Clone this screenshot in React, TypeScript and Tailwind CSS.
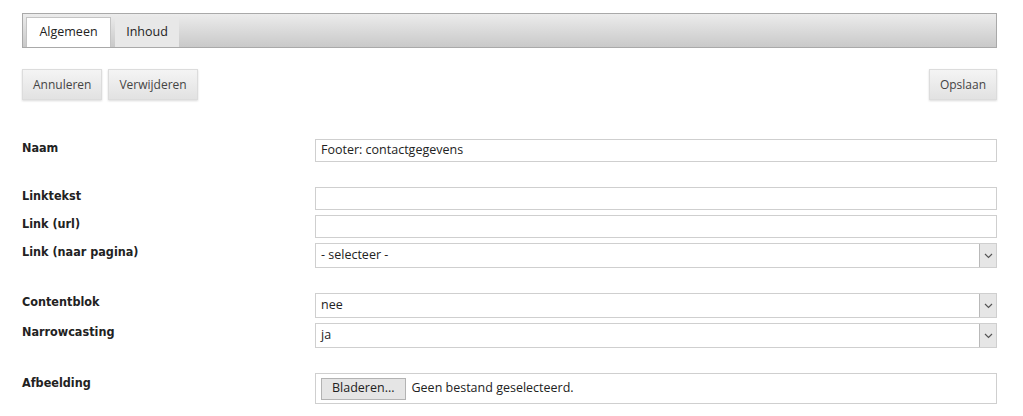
import React from "react";

const ui = { fontFamily: '"Open Sans", "Noto Sans", sans-serif' };
const lbl = { fontFamily: '"DejaVu Sans Condensed", "DejaVu Sans", sans-serif' };

function Btn({ children }: { children: React.ReactNode }) {
  return (
    <button
      className="h-[31px] px-[10px] border border-[#dcdcdc] bg-gradient-to-b from-[#f4f4f4] to-[#e2e2e2] text-[12px] text-[#444] shadow-[0_1px_2px_rgba(0,0,0,0.15)]"
      style={ui}
    >
      {children}
    </button>
  );
}

function Label({ children }: { children: React.ReactNode }) {
  return (
    <div className="w-[293px] shrink-0 pt-0 text-[12.5px] leading-[18px] font-bold text-[#222]" style={lbl}>
      {children}
    </div>
  );
}

function TextInput({ value = "" }: { value?: string }) {
  return (
    <div
      className="flex-1 h-[23px] border border-[#cfcfcf] bg-white px-[5px] flex items-center text-[12.5px] text-[#222]"
      style={ui}
    >
      {value}
    </div>
  );
}

function Select({ value }: { value: string }) {
  return (
    <div className="flex-1 h-[25px] border border-[#cfcfcf] bg-white flex items-stretch" style={ui}>
      <div className="flex-1 px-[5px] flex items-center text-[12.5px] text-[#222]">{value}</div>
      <div className="w-[17px] border-l border-[#b9b9b9] bg-[#e6e6e6] flex items-center justify-center">
        <svg width="9" height="6" viewBox="0 0 9 6">
          <path d="M1 1 L4.5 4.5 L8 1" fill="none" stroke="#555" strokeWidth="1.2" />
        </svg>
      </div>
    </div>
  );
}

export default function App() {
  return (
    <div className="w-[1023px] h-[416px] bg-white pl-[22px] pr-[26px] pt-[13px] overflow-hidden">
      <div className="h-[35px] border border-[#a9a9a9] bg-gradient-to-b from-[#ececec] to-[#c9c9c9] flex items-end pl-[3px] gap-[4px]" style={ui}>
        <div className="h-[30px] w-[85px] bg-white border-l border-t border-r border-[#c4c4c4] flex items-center justify-center text-[12.5px] text-[#222]">
          Algemeen
        </div>
        <div className="h-[30px] w-[64px] bg-[#e8e8e8] flex items-center justify-center text-[12.5px] text-[#222]">
          Inhoud
        </div>
      </div>

      <div className="mt-[21px] flex items-center">
        <Btn>Annuleren</Btn>
        <div className="w-[6px]" />
        <Btn>Verwijderen</Btn>
        <div className="flex-1" />
        <Btn>Opslaan</Btn>
      </div>

      <div className="mt-[39px] flex">
        <Label>Naam</Label>
        <TextInput value="Footer: contactgegevens" />
      </div>

      <div className="mt-[25px] flex">
        <Label>Linktekst</Label>
        <TextInput />
      </div>
      <div className="mt-[5px] flex">
        <Label>Link (url)</Label>
        <TextInput />
      </div>
      <div className="mt-[5px] flex">
        <Label>Link (naar pagina)</Label>
        <Select value="- selecteer -" />
      </div>

      <div className="mt-[25px] flex">
        <Label>Contentblok</Label>
        <Select value="nee" />
      </div>
      <div className="mt-[5px] flex">
        <Label>Narrowcasting</Label>
        <Select value="ja" />
      </div>

      <div className="mt-[25px] flex">
        <Label>
          <div className="pt-[1px]">Afbeelding</div>
        </Label>
        <div className="flex-1 h-[31px] border border-[#cfcfcf] bg-white flex items-center pl-[5px] gap-[6px] text-[12.5px] text-[#222]" style={ui}>
          <div className="h-[22px] px-[10px] border border-[#b3b3b3] bg-[#e5e5e5] flex items-center">Bladeren...</div>
          <span>Geen bestand geselecteerd.</span>
        </div>
      </div>
    </div>
  );
}
